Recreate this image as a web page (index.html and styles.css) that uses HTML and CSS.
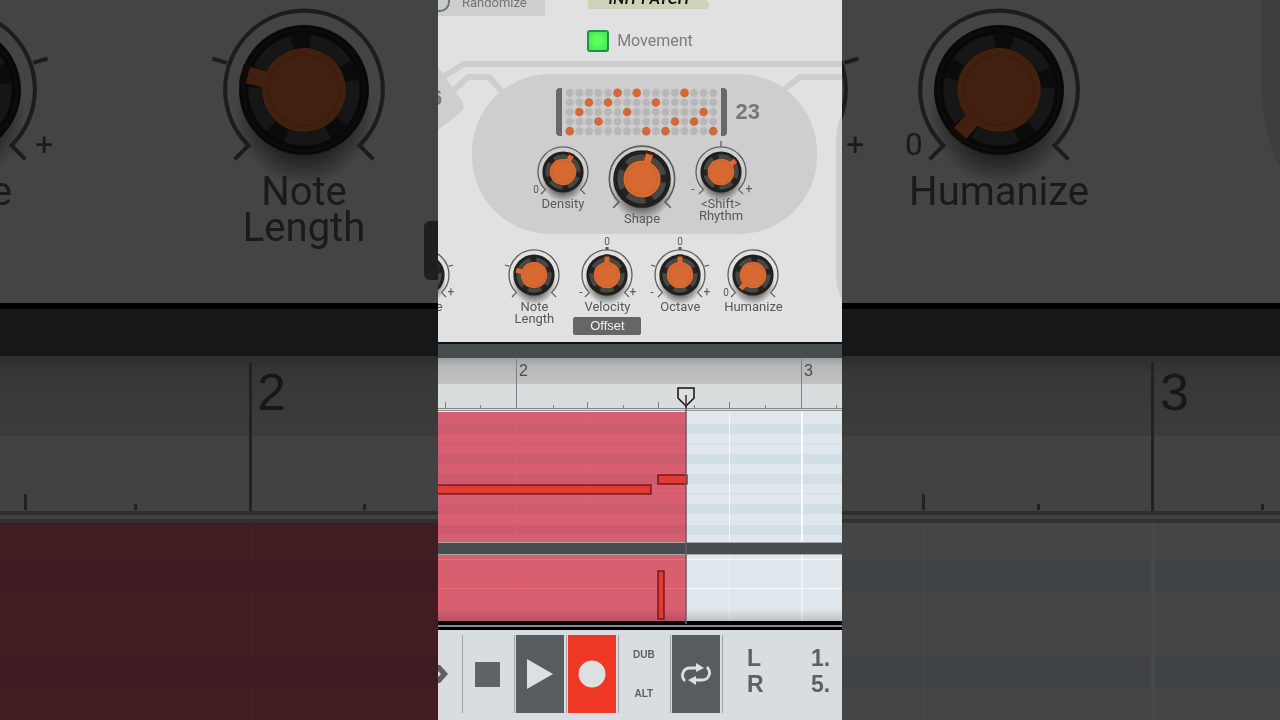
FILE: index.html
```
<!DOCTYPE html>
<html lang="en">
<head>
  <meta charset="UTF-8" />
  <meta name="viewport" content="width=device-width, initial-scale=1.0" />
  <title>Movement - Init Patch</title>
  <link rel="stylesheet" href="styles.css">
</head>
<body>
  <!-- Shared knob parts, centred on 0,0 -->
  <svg class="defs" aria-hidden="true">
    <defs>
      <radialGradient id="shadow">
        <stop offset="0.6" stop-color="#000" stop-opacity="0.5" />
        <stop offset="1" stop-color="#000" stop-opacity="0" />
      </radialGradient>
      <pattern id="dots" width="10" height="10" patternUnits="userSpaceOnUse">
        <circle cx="5" cy="5" r="4.2" fill="#b7b7b7" />
      </pattern>
      <linearGradient id="floor" x1="0" y1="0" x2="0" y2="1">
        <stop offset="0" stop-color="#000" stop-opacity="0" />
        <stop offset="1" stop-color="#000" stop-opacity="0.15" />
      </linearGradient>
      <g id="scale" fill="none" stroke="#5e5e5e" stroke-width="1.3">
        <path d="M-22 22 L-17.6 17.6 A25 25 0 1 1 17.6 17.6 L22 22" />
      </g>
      <g id="body">
        <ellipse cx="0" cy="7" rx="22" ry="23" fill="url(#shadow)" />
        <circle r="20.6" fill="#1c1c1b" />
        <circle r="19.2" fill="none" stroke="#2a2a28" stroke-width="0.6" />
        <circle r="17.8" fill="#242423" />
      </g>
      <g id="cap">
        <circle r="15.5" fill="none" stroke="#474845" stroke-width="4.2" pathLength="100" stroke-dasharray="14 6" stroke-dashoffset="-3" transform="rotate(-90)" />
        <rect x="-3" y="-20.6" width="6" height="4" fill="#3d2012" />
        <rect x="-2.6" y="-18.4" width="5.2" height="8" fill="#d96a31" />
        <circle r="13.3" fill="#da6a30" />
        <circle r="11.2" fill="#d76932" stroke="#c95f2b" stroke-width="0.6" />
      </g>
      <path id="tick-left" d="M-24.5 -8.6 L-29 -10" stroke="#5e5e5e" stroke-width="1.3" />
      <path id="tick-right" d="M24.5 -8.6 L29 -10" stroke="#5e5e5e" stroke-width="1.3" />
    </defs>
  </svg>

  <main class="stage">
    <section class="backdrop" aria-hidden="true">
      <div class="backdrop-synth">
        <div class="backdrop-knobs backdrop-knobs-left">
          <div class="big-knob">
            <svg class="big-dial" viewBox="-26 -26 52 52">
              <use href="#body" /><use href="#scale" /><use href="#cap" /><use href="#tick-right" />
              <text x="28" y="20.5">+</text>
            </svg>
            <span class="big-label">Range</span>
          </div>
          <div class="big-knob">
            <svg class="big-dial" viewBox="-26 -26 52 52">
              <use href="#body" /><use href="#scale" /><use href="#tick-left" />
              <use href="#cap" transform="rotate(-75)" />
            </svg>
            <span class="big-label">Note<br>Length</span>
          </div>
          <div class="big-knob">
            <svg class="big-dial" viewBox="-26 -26 52 52">
              <use href="#body" /><use href="#scale" /><use href="#cap" />
            </svg>
            <span class="big-label">Velocity</span>
            <span class="big-offset"></span>
          </div>
        </div>
      </div>
      <div class="backdrop-bar"></div>
      <svg class="backdrop-ruler">
        <g fill="#6d7173">
          <rect x="249" y="6" width="3" height="150" />
          <rect x="24" y="138" width="3" height="16" />
          <rect x="134" y="148" width="3" height="6" />
          <rect x="363" y="148" width="3" height="6" />
        </g>
        <text x="257" y="54">2</text>
      </svg>
      <div class="backdrop-edge"></div>
      <svg class="backdrop-roll recording">
        <rect x="250" width="3" height="100%" fill="#fff" fill-opacity="0.05" />
      </svg>
    </section>

    <section class="panel">
      <div class="synth">
        <svg class="wiring" aria-hidden="true">
          <g fill="none" stroke="#cecece" stroke-width="6">
            <path d="M0 80 L26 64 H2000" />
            <path d="M15 91 L30 77 H51 L66 94" />
            <path d="M343 92 L362 77 H2000" />
          </g>
          <path d="M0 67 L24 101 Q28 108 22 113 L0 130 Z" fill="#cecece" />
          <rect x="398" y="80" width="2000" height="254" rx="60" fill="#cecece" />
          <text x="-8" y="105">6</text>
        </svg>

        <header class="synth-top">
          <button class="randomize" type="button"><span class="led"></span>Randomize</button>
          <span class="patch-name">INIT PATCH</span>
        </header>

        <div class="movement">
          <input type="checkbox" id="movement" checked />
          <label for="movement">Movement</label>
        </div>

        <div class="pill">
          <div class="pattern">
            <div class="steps">
              <svg class="step-dots" viewBox="0 0 160 50" role="img" aria-label="Pattern steps">
                <rect width="160" height="50" fill="url(#dots)" />
                <g fill="#d2693a">
                  <circle cx="5" cy="45" r="4.5" />
                  <circle cx="15" cy="25" r="4.5" />
                  <circle cx="25" cy="15" r="4.5" />
                  <circle cx="35" cy="35" r="4.5" />
                  <circle cx="45" cy="15" r="4.5" />
                  <circle cx="55" cy="5" r="4.5" />
                  <circle cx="65" cy="25" r="4.5" />
                  <circle cx="75" cy="5" r="4.5" />
                  <circle cx="85" cy="45" r="4.5" />
                  <circle cx="95" cy="15" r="4.5" />
                  <circle cx="105" cy="45" r="4.5" />
                  <circle cx="115" cy="35" r="4.5" />
                  <circle cx="125" cy="5" r="4.5" />
                  <circle cx="135" cy="35" r="4.5" />
                  <circle cx="145" cy="25" r="4.5" />
                  <circle cx="155" cy="45" r="4.5" />
                </g>
              </svg>
            </div>
            <output class="pattern-number">23</output>
          </div>

          <div class="pill-knobs">
            <label class="knob knob-small">
              <svg class="dial" viewBox="-26 -26 52 52">
                <use href="#body" /><use href="#scale" />
                <use href="#cap" transform="rotate(27)" />
                <text x="-27" y="21">0</text>
              </svg>
              <input type="range" min="0" max="100" value="60" />
              Density
            </label>
            <label class="knob knob-large">
              <svg class="dial" viewBox="-26 -26 52 52">
                <use href="#body" transform="scale(1.07)" /><use href="#scale" />
                <use href="#cap" transform="rotate(17) scale(1.07)" />
              </svg>
              <input type="range" min="0" max="100" value="56" />
              Shape
            </label>
            <label class="knob knob-small">
              <svg class="dial" viewBox="-26 -26 52 52">
                <path d="M0 -25 V-31" stroke="#5e5e5e" stroke-width="1.3" />
                <use href="#body" /><use href="#scale" />
                <use href="#cap" transform="rotate(52)" />
                <text class="sign" x="-28" y="21">-</text>
                <text class="sign" x="28" y="21">+</text>
              </svg>
              <input type="range" min="-50" max="50" value="20" />
              &lt;Shift&gt;<br>Rhythm
            </label>
          </div>
        </div>

        <div class="knobs">
          <label class="knob">
            <svg class="dial" viewBox="-26 -26 52 52">
              <use href="#body" /><use href="#scale" /><use href="#cap" /><use href="#tick-right" />
              <text class="sign" x="27" y="21">+</text>
            </svg>
            <input type="range" min="-50" max="50" value="0" />
            Range
          </label>
          <label class="knob">
            <svg class="dial" viewBox="-26 -26 52 52">
              <use href="#body" /><use href="#scale" /><use href="#tick-left" />
              <use href="#cap" transform="rotate(-75)" />
            </svg>
            <input type="range" min="0" max="100" value="22" />
            Note<br>Length
          </label>
          <div class="knob-group">
            <label class="knob">
              <svg class="dial" viewBox="-26 -26 52 52">
                <rect x="-1.5" y="-28" width="3" height="3" fill="#555" />
                <use href="#body" /><use href="#scale" /><use href="#cap" />
                <text x="0" y="-30">0</text>
                <text class="sign" x="-26" y="21">-</text>
                <text class="sign" x="26" y="21">+</text>
              </svg>
              <input type="range" min="-50" max="50" value="0" />
              Velocity
            </label>
            <button class="offset" type="button">Offset</button>
          </div>
          <label class="knob">
            <svg class="dial" viewBox="-26 -26 52 52">
              <rect x="-1.5" y="-28" width="3" height="3" fill="#555" />
              <use href="#body" /><use href="#scale" /><use href="#cap" />
              <use href="#tick-left" /><use href="#tick-right" />
              <text x="0" y="-30">0</text>
              <text class="sign" x="-28" y="21">-</text>
              <text class="sign" x="27" y="21">+</text>
            </svg>
            <input type="range" min="-50" max="50" value="0" />
            Octave
          </label>
          <label class="knob">
            <svg class="dial" viewBox="-26 -26 52 52">
              <use href="#body" /><use href="#scale" />
              <use href="#cap" transform="rotate(-138)" />
              <text x="-27" y="21">0</text>
            </svg>
            <input type="range" min="0" max="100" value="0" />
            Humanize
          </label>
        </div>
      </div>

      <div class="timeline">
        <div class="timeline-bar"></div>
        <svg class="ruler">
          <g fill="#7d8183">
            <rect x="78" y="1" width="1" height="49" />
            <rect x="363" y="1" width="1" height="49" />
            <rect x="7" y="44" width="1" height="6" />
            <rect x="149" y="44" width="1" height="6" />
            <rect x="220" y="44" width="1" height="6" />
            <rect x="291" y="44" width="1" height="6" />
            <rect x="42" y="47" width="1" height="3" />
            <rect x="115" y="47" width="1" height="3" />
            <rect x="185" y="47" width="1" height="3" />
            <rect x="256" y="47" width="1" height="3" />
            <rect x="327" y="47" width="1" height="3" />
            <rect x="398" y="47" width="1" height="3" />
          </g>
          <text x="81" y="18">2</text>
          <text x="366" y="18">3</text>
        </svg>
        <div class="ruler-edge"></div>

        <svg class="roll">
          <g fill="#fff">
            <rect x="7" width="1" height="130" fill-opacity="0.15" />
            <rect x="78" width="2" height="130" fill-opacity="0.15" />
            <rect x="149" width="1" height="130" fill-opacity="0.2" />
            <rect x="220" width="1" height="130" fill-opacity="0.2" />
            <rect x="291" width="1" height="130" fill-opacity="0.7" />
            <rect x="363" width="2" height="130" fill-opacity="0.8" />
          </g>
          <rect class="take" width="248" height="130" />
          <g class="note">
            <rect x="-2" y="73" width="215" height="9" />
            <rect x="220" y="63" width="29" height="9" />
          </g>
        </svg>
        <div class="divider"></div>
        <svg class="velocity">
          <g fill="#fff">
            <rect y="4" width="100%" height="1" fill-opacity="0.8" />
            <rect y="33" width="100%" height="1" fill-opacity="0.8" />
            <rect x="78" width="2" height="66" fill-opacity="0.15" />
            <rect x="291" width="1" height="66" fill-opacity="0.5" />
            <rect x="363" width="2" height="66" fill-opacity="0.6" />
          </g>
          <rect y="54" width="100%" height="12" fill="url(#floor)" />
          <rect class="take" width="248" height="66" />
          <g class="note">
            <rect x="220" y="16" width="6" height="48" />
          </g>
        </svg>
        <div class="timeline-floor"></div>

        <svg class="playhead" aria-hidden="true">
          <path d="M248 64 V282" stroke="#6b6064" stroke-width="1.6" />
          <path d="M240 46 H256 V56 L248 64 L240 56 Z" fill="#dcdfe0" stroke="#111" stroke-width="1.5" />
          <path d="M248 53 V66" stroke="#333" stroke-width="1.5" />
        </svg>
      </div>

      <div class="transport">
        <button class="cell cell-skip" type="button" aria-label="Forward">
          <svg width="24" height="22" viewBox="0 0 24 22"><path d="M-8 2 H2 L10 11 L2 20 H-8 Z M-4 7 H-1 L3 11 L-1 15 H-4 Z" fill="#5c6164" fill-rule="evenodd" /></svg>
        </button>
        <div class="cell">
          <button class="key" type="button" aria-label="Stop">
            <svg width="25" height="25"><rect width="25" height="25" fill="#5f6467" /></svg>
          </button>
        </div>
        <div class="cell">
          <button class="key key-on" type="button" aria-label="Play">
            <svg width="26" height="32" viewBox="0 0 26 32"><path d="M0 1 L26 16 L0 31 Z" fill="#dde0e1" /></svg>
          </button>
        </div>
        <div class="cell">
          <button class="key key-record" type="button" aria-label="Record">
            <svg width="28" height="28"><circle cx="14" cy="14" r="13.5" fill="#dde0e1" /></svg>
          </button>
        </div>
        <div class="cell">
          <div class="modes">
            <button type="button">DUB</button>
            <button type="button">ALT</button>
          </div>
        </div>
        <div class="cell">
          <button class="key key-on" type="button" aria-label="Loop">
            <svg width="30" height="24" viewBox="0 0 30 24">
              <g fill="none" stroke="#dde0e1" stroke-width="2.8">
                <path d="M4 19 C-1 14 2 6 9 6 H16" />
                <path d="M26 5 C31 10 28 18 21 18 H14" />
              </g>
              <path d="M15 1 L23 6 L15 10 Z M15 14 L7 18 L15 23 Z" fill="#dde0e1" />
            </svg>
          </button>
        </div>
        <div class="cell">
          <dl class="locators">
            <dt>L</dt><dd>1.</dd>
            <dt>R</dt><dd>5.</dd>
          </dl>
        </div>
      </div>
    </section>

    <section class="backdrop" aria-hidden="true">
      <div class="backdrop-synth">
        <svg class="wiring">
          <rect x="419" y="-400" width="1200" height="675" rx="190" fill="#cecece" />
        </svg>
        <div class="backdrop-knobs backdrop-knobs-right">
          <div class="big-knob">
            <svg class="big-dial" viewBox="-26 -26 52 52">
              <use href="#body" /><use href="#scale" /><use href="#cap" /><use href="#tick-right" />
              <text x="28" y="20.5">+</text>
            </svg>
            <span class="big-label">Octave</span>
          </div>
          <div class="big-knob">
            <svg class="big-dial" viewBox="-26 -26 52 52">
              <use href="#body" /><use href="#scale" />
              <use href="#cap" transform="rotate(-138)" />
              <text x="-27" y="20.5">0</text>
            </svg>
            <span class="big-label">Humanize</span>
          </div>
        </div>
      </div>
      <div class="backdrop-bar"></div>
      <svg class="backdrop-ruler">
        <g fill="#6d7173">
          <rect x="309" y="6" width="3" height="150" />
          <rect x="80" y="138" width="3" height="16" />
          <rect x="195" y="148" width="3" height="6" />
          <rect x="419" y="148" width="3" height="6" />
        </g>
        <text x="318" y="54">3</text>
      </svg>
      <div class="backdrop-edge"></div>
      <svg class="backdrop-roll">
        <rect x="80" width="3" height="100%" fill="#fff" fill-opacity="0.3" />
        <rect x="309" width="4" height="100%" fill="#fff" fill-opacity="0.5" />
      </svg>
    </section>
  </main>
</body>
</html>
```

FILE: styles.css
```
:root {
  --panel: #e1e1e1;
  --panel-dark: #cecece;
  --ink: #585858;
  --bar: #474c4f;
  --transport: #d9dddf;
  --lane: #dfe6ec;
  --lane-dark: #d3dfe6;
}

*, *::before, *::after {
  box-sizing: border-box;
}

body {
  margin: 0;
  font-family: Roboto, "Liberation Sans", sans-serif;
  background: #000;
  color: var(--ink);
}

button {
  margin: 0;
  padding: 0;
  border: 0;
  background: none;
  color: inherit;
  font: inherit;
}

svg {
  display: block;
}

.defs {
  position: absolute;
  width: 0;
  height: 0;
}

.stage {
  display: grid;
  grid-template-columns: minmax(0, 13fr) minmax(0, 12fr) minmax(0, 13fr);
  height: 100vh;
  overflow: hidden;
}

/* Dimmed enlargement on both sides */
.backdrop {
  display: flex;
  flex-direction: column;
  overflow: hidden;
  filter: brightness(0.3);
}

.backdrop-synth {
  position: relative;
  flex: none;
  height: 303px;
  padding-top: 8px;
  overflow: hidden;
  background: var(--panel);
}

.backdrop-knobs {
  display: grid;
}

.backdrop-knobs-left {
  grid-template-columns: 348px 232px 232px;
  margin-left: -160px;
}

.backdrop-knobs-right {
  grid-template-columns: 232px 232px;
  margin-left: -191px;
}

.big-knob {
  display: flex;
  flex-direction: column;
  align-items: center;
  width: 232px;
}

.big-dial {
  width: 164px;
  height: 164px;
  overflow: visible;
}

.big-label {
  margin-top: 2px;
  font-size: 40px;
  line-height: 36px;
  text-align: center;
}

.big-offset {
  width: 224px;
  height: 59px;
  margin-top: 11px;
  border-radius: 6px;
  background: #666;
}

.backdrop-bar {
  flex: none;
  height: 53px;
  border-top: 6px solid #000;
  background: var(--bar);
}

.backdrop-ruler {
  flex: none;
  width: 100%;
  height: 155px;
  background: linear-gradient(#959899, #b6b8b8 20px, #c3c6c5 80px, #dadddd 80px);
}

.backdrop-ruler text {
  font: 52px "Liberation Sans", sans-serif;
  fill: #4b4e50;
}

.backdrop-edge {
  flex: none;
  height: 12px;
  background: linear-gradient(#96999a 4px, #dadddd 4px, #dadddd 8px, #a0a3a4 8px);
}

.backdrop-roll {
  flex: 1;
  width: 100%;
  background: linear-gradient(var(--lane) 37px, var(--lane-dark) 37px, var(--lane-dark) 69px,
    var(--lane) 69px, var(--lane) 134px, var(--lane-dark) 134px, var(--lane-dark) 165px, var(--lane) 165px);
}

.backdrop-roll.recording {
  background-color: #f76979;
  background-blend-mode: multiply;
}

/* Main panel */
.panel {
  display: flex;
  flex-direction: column;
  overflow: hidden;
  background: var(--panel);
}

.synth {
  position: relative;
  flex: none;
  padding-bottom: 7px;
  overflow: hidden;
}

.wiring {
  position: absolute;
  inset: 0;
  width: 100%;
  height: 100%;
}

.wiring text {
  font: bold 22px "Liberation Sans", sans-serif;
  fill: #777;
}

.synth-top,
.movement,
.pill,
.knobs,
.backdrop-knobs {
  position: relative;
}

.synth-top {
  display: flex;
  align-items: flex-end;
  gap: 43px;
  height: 16px;
  overflow: hidden;
}

.randomize {
  display: flex;
  align-items: center;
  gap: 12px;
  height: 28px;
  padding-right: 18px;
  background: var(--panel-dark);
  color: #747474;
  font-size: 13px;
}

.led {
  width: 20px;
  height: 20px;
  margin-left: -8px;
  border: 2px solid #6f7370;
  border-radius: 50%;
  background: #c3cfc8;
}

.patch-name {
  width: 122px;
  height: 22px;
  margin-bottom: 7px;
  background: #d0d1b6;
  clip-path: polygon(0 0, 100% 0, 98% 70%, 100% 78%, 98% 100%, 1% 100%, 0 90%);
  color: #111;
  font: italic bold 16px/22px Lato, sans-serif;
  text-align: center;
}

.movement {
  display: flex;
  justify-content: center;
  align-items: center;
  gap: 8px;
  padding-top: 13px;
  color: #7c7c7c;
  font-size: 16px;
  line-height: 24px;
}

.movement input {
  appearance: none;
  width: 22px;
  height: 22px;
  margin: 0;
  border: 2px solid #1c9440;
  border-radius: 3px;
  background: radial-gradient(#5dff5d 30%, #4ee957 75%);
}

.pill {
  height: 160px;
  margin: 21px 25px 0 34px;
  padding: 14px 5px 0 0;
  border-radius: 78px;
  background: var(--panel-dark);
}

.pattern {
  display: grid;
  grid-template-columns: 1fr auto 1fr;
  align-items: center;
  gap: 8px;
}

.steps {
  display: flex;
  grid-column: 2;
  gap: 3px;
}

.steps::before,
.steps::after {
  content: '';
  width: 6px;
  border-radius: 4px 0 0 4px;
  background: #686868;
}

.steps::after {
  border-radius: 0 4px 4px 0;
}

.step-dots {
  width: 153px;
  height: 48px;
}

.pattern-number {
  color: #777;
  font: bold 22px "Liberation Sans", sans-serif;
}

.pill-knobs {
  display: grid;
  grid-template-columns: repeat(3, 79px);
  justify-content: center;
  margin-top: 9px;
}

/* Knobs */
.knob {
  position: relative;
  display: block;
  font-size: 13px;
  line-height: 12px;
  text-align: center;
}

.dial {
  width: 52px;
  height: 52px;
  margin: 0 auto;
  overflow: visible;
}

.dial text,
.big-dial text {
  font-size: 10px;
  fill: var(--ink);
  text-anchor: middle;
}

.dial .sign {
  font-size: 12px;
}

.knob input {
  position: absolute;
  top: 0;
  left: 0;
  width: 100%;
  height: 52px;
  margin: 0;
  opacity: 0;
}

.knob-small {
  padding-top: 1px;
}

.knob-large .dial {
  width: 68px;
  height: 68px;
}

.knobs {
  display: grid;
  grid-template-columns: 110px repeat(4, 73px);
  margin: 15px 0 0 -50px;
}

.knobs .knob {
  width: 73px;
}

.offset {
  display: block;
  width: 68px;
  height: 18px;
  margin: 4px auto 0;
  border-radius: 2px;
  background: #666;
  color: #eee;
  font: 13px/18px "Liberation Sans", sans-serif;
}

/* Timeline */
.timeline {
  position: relative;
  flex: none;
}

.timeline-bar {
  height: 16px;
  border-top: 2px solid #111;
  background: var(--bar);
}

.ruler {
  width: 100%;
  height: 50px;
  background: linear-gradient(#9da0a1, #b4b6b7 8px, #c2c4c4 26px, #dadddd 26px);
}

.ruler text {
  font: 16px "Liberation Sans", sans-serif;
  fill: #4b4e50;
}

.ruler-edge {
  height: 4px;
  background: linear-gradient(#85898a 1px, #d5d8d9 1px, #d5d8d9 2px, #9a9d9f 2px, #9a9d9f 3px, var(--lane) 3px);
}

.roll {
  width: 100%;
  height: 130px;
  background: linear-gradient(var(--lane) 12px, var(--lane-dark) 12px, var(--lane-dark) 22px,
    var(--lane) 22px, var(--lane) 31px, var(--lane-dark) 31px, var(--lane-dark) 32px,
    var(--lane) 32px, var(--lane) 42px, var(--lane-dark) 42px, var(--lane-dark) 52px,
    var(--lane) 52px, var(--lane) 62px, var(--lane-dark) 62px, var(--lane-dark) 72px,
    var(--lane) 72px, var(--lane) 81px, var(--lane-dark) 81px, var(--lane-dark) 82px,
    var(--lane) 82px, var(--lane) 92px, var(--lane-dark) 92px, var(--lane-dark) 102px,
    var(--lane) 102px, var(--lane) 113px, var(--lane-dark) 113px, var(--lane-dark) 123px, var(--lane) 123px);
}

.take {
  fill: #f76979;
  mix-blend-mode: multiply;
}

.note {
  fill: #e53a32;
  stroke: #5d0d13;
  stroke-width: 1.2;
}

.divider {
  height: 13px;
  border: solid #a5a8a9;
  border-width: 1px 0;
  background: var(--bar);
}

.velocity {
  width: 100%;
  height: 66px;
  background: var(--lane);
}

.timeline-floor {
  height: 9px;
  background: linear-gradient(#000 4px, #8b8b8b 4px, #8b8b8b 6px, #000 6px);
}

.playhead {
  position: absolute;
  top: 0;
  left: 0;
  width: 100%;
  height: 100%;
  pointer-events: none;
}

/* Transport */
.transport {
  display: grid;
  flex: 1;
  grid-template-columns: 24px repeat(5, 52px) 1fr;
  padding: 5px 0 7px;
  background: var(--transport);
}

.cell {
  display: flex;
  padding: 0 2px 0 1px;
  border-left: 1px solid #a0a4a6;
}

.cell-skip {
  align-items: center;
  padding: 0;
  border: 0;
}

.key {
  display: flex;
  flex: 1;
  align-items: center;
  justify-content: center;
}

.key-on {
  background: #565c60;
}

.key-record {
  background: #ef3725;
}

.modes {
  display: flex;
  flex: 1;
  flex-direction: column;
  color: #5c6164;
  font: bold 10px "Liberation Sans", sans-serif;
}

.modes button {
  flex: 1;
}

.locators {
  display: grid;
  flex: 1;
  grid-template-columns: auto auto;
  align-content: start;
  justify-content: space-between;
  margin: 0;
  padding: 10px 10px 0 23px;
  color: #5c6164;
  font: bold 23px/26px "Liberation Sans", sans-serif;
}

.locators dd {
  margin: 0;
}
```
